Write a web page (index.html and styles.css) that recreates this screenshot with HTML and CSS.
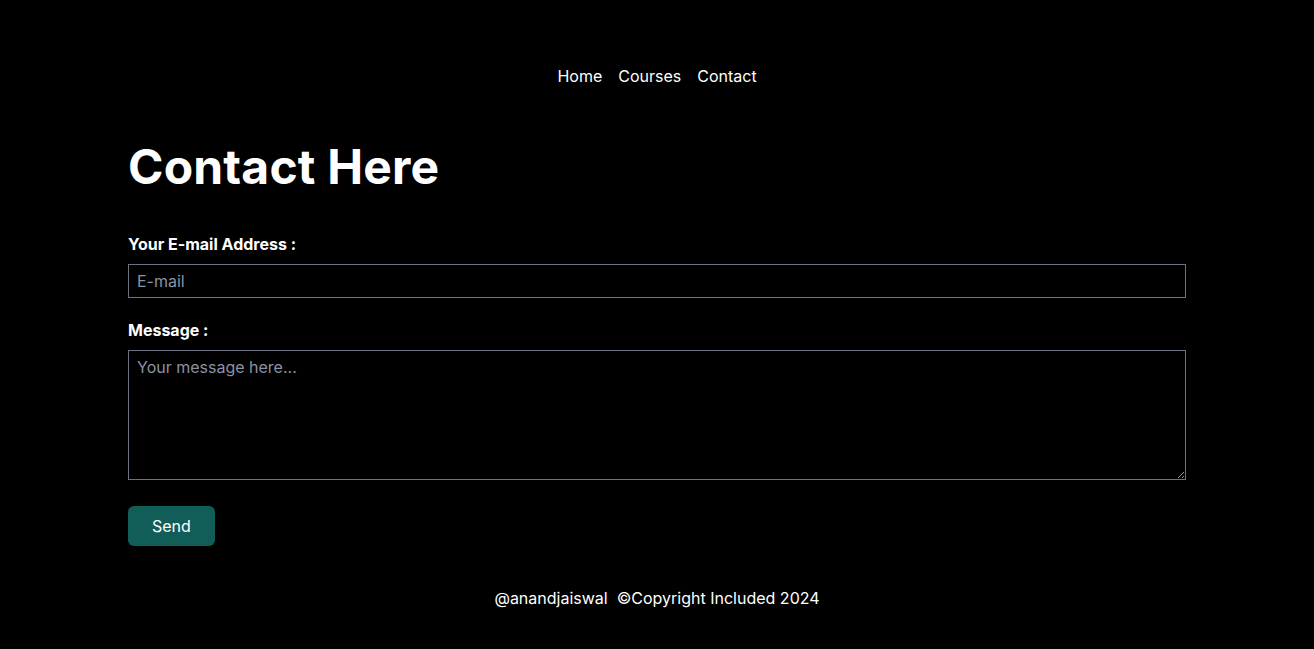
FILE: index.html
```html
<!DOCTYPE html>
<html lang="en">
<head>
<meta charset="utf-8">
<title>Contact</title>
<link rel="stylesheet" href="styles.css">
</head>
<body>
<header class="site-header">
  <nav class="nav">
    <a class="nav-link" href="#">Home</a>
    <a class="nav-link" href="#">Courses</a>
    <a class="nav-link" href="#">Contact</a>
  </nav>
</header>
<main class="content">
  <h1 class="title">Contact Here</h1>
  <form class="form">
    <label class="label" for="email">Your E-mail Address :</label>
    <input class="field" id="email" type="email" placeholder="E-mail">
    <label class="label label-second" for="msg">Message :</label>
    <textarea class="field area" id="msg" placeholder="Your message here..."></textarea>
    <button class="send" type="button">Send</button>
  </form>
</main>
<footer class="footer">@anandjaiswal&nbsp; ©Copyright Included 2024</footer>
</body>
</html>
```

FILE: styles.css
```css
* { box-sizing: border-box; }
html, body { margin: 0; padding: 0; background: #000; }
body {
  color: #fff;
  font-family: Inter, "Noto Sans", sans-serif;
  font-size: 16px;
  line-height: 24px;
}
.site-header { padding-top: 64px; }
.nav { display: flex; justify-content: center; gap: 16px; }
.nav-link { color: #fff; text-decoration: none; }
.content { padding: 0 128px; }
.title {
  margin: 55px 0 0;
  font-size: 48px;
  line-height: 48px;
  font-weight: 700;
  letter-spacing: 0.18px;
}
.form { display: flex; flex-direction: column; align-items: stretch; margin-top: 41px; }
.label { font-weight: 700; display: block; }
.label-second { margin-top: 20px; }
.field {
  display: block;
  margin-top: 8px;
  background: #000;
  color: #fff;
  border: 1px solid #6b7280;
  border-radius: 0;
  font-family: inherit;
  font-size: 16px;
  line-height: 24px;
  padding: 4px 8px;
  height: 34px;
  outline: none;
}
.field::placeholder { color: #8a93a2; opacity: 1; }
.area { height: 130px; resize: vertical; }
.send {
  align-self: flex-start;
  margin-top: 26px;
  background: #115e59;
  color: #fff;
  border: none;
  border-radius: 6px;
  font-family: inherit;
  font-size: 16px;
  line-height: 24px;
  padding: 8px 24px;
  height: 40px;
}
.footer { text-align: center; margin-top: 40px; padding-bottom: 39px; }
```
